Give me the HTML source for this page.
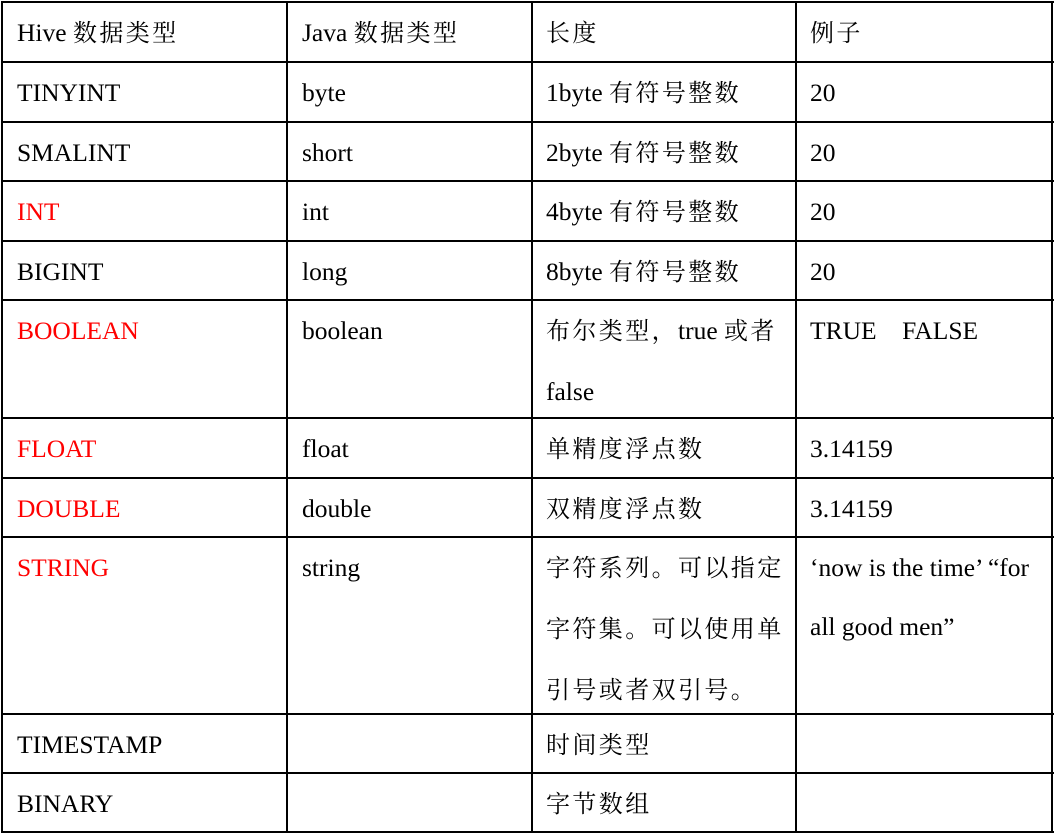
<!DOCTYPE html>
<html><head><meta charset="utf-8"><style>
body{margin:0;width:1054px;height:833px;background:#fff;position:relative;overflow:hidden;font-family:"Liberation Serif","Noto Serif CJK SC",serif;font-size:25.5px;color:#000}
.h{position:absolute;left:1px;width:1053px;height:2px;background:#000}
.v{position:absolute;top:1px;height:832px;width:2px;background:#000}
.t{position:absolute;line-height:59px;white-space:nowrap}
.r{color:#f00}
.c{font-size:24px;letter-spacing:2.4px}
</style></head><body>
<div class="h" style="top:1px"></div><div class="h" style="top:61px"></div><div class="h" style="top:121px"></div><div class="h" style="top:180px"></div><div class="h" style="top:240px"></div><div class="h" style="top:299px"></div><div class="h" style="top:417px"></div><div class="h" style="top:477px"></div><div class="h" style="top:536px"></div><div class="h" style="top:713px"></div><div class="h" style="top:772px"></div><div class="h" style="top:831px"></div>
<div class="v" style="left:1px"></div><div class="v" style="left:286px"></div><div class="v" style="left:531px"></div><div class="v" style="left:795px"></div><div class="v" style="left:1051px"></div>

<div class="t" style="left:17px;top:3px">Hive <span class="c">数据类型</span></div>
<div class="t" style="left:302px;top:3px">Java <span class="c">数据类型</span></div>
<div class="t" style="left:546px;top:3px"><span class="c">长度</span></div>
<div class="t" style="left:810px;top:3px"><span class="c">例子</span></div>

<div class="t" style="left:17px;top:63px">TINYINT</div>
<div class="t" style="left:302px;top:63px">byte</div>
<div class="t" style="left:546px;top:63px">1byte <span class="c">有符号整数</span></div>
<div class="t" style="left:810px;top:63px">20</div>

<div class="t" style="left:17px;top:123px">SMALINT</div>
<div class="t" style="left:302px;top:123px">short</div>
<div class="t" style="left:546px;top:123px">2byte <span class="c">有符号整数</span></div>
<div class="t" style="left:810px;top:123px">20</div>

<div class="t r" style="left:17px;top:182px">INT</div>
<div class="t" style="left:302px;top:182px">int</div>
<div class="t" style="left:546px;top:182px">4byte <span class="c">有符号整数</span></div>
<div class="t" style="left:810px;top:182px">20</div>

<div class="t" style="left:17px;top:242px">BIGINT</div>
<div class="t" style="left:302px;top:242px">long</div>
<div class="t" style="left:546px;top:242px">8byte <span class="c">有符号整数</span></div>
<div class="t" style="left:810px;top:242px">20</div>

<div class="t r" style="left:17px;top:301px">BOOLEAN</div>
<div class="t" style="left:302px;top:301px">boolean</div>
<div class="t" style="left:546px;top:301px"><span class="c">布尔类型，</span>true <span class="c">或者</span><br>false</div>
<div class="t" style="left:810px;top:301px">TRUE&nbsp;&nbsp;&nbsp;&nbsp;FALSE</div>

<div class="t r" style="left:17px;top:419px">FLOAT</div>
<div class="t" style="left:302px;top:419px">float</div>
<div class="t" style="left:546px;top:419px"><span class="c">单精度浮点数</span></div>
<div class="t" style="left:810px;top:419px">3.14159</div>

<div class="t r" style="left:17px;top:479px">DOUBLE</div>
<div class="t" style="left:302px;top:479px">double</div>
<div class="t" style="left:546px;top:479px"><span class="c">双精度浮点数</span></div>
<div class="t" style="left:810px;top:479px">3.14159</div>

<div class="t r" style="left:17px;top:538px">STRING</div>
<div class="t" style="left:302px;top:538px">string</div>
<div class="t" style="left:546px;top:538px"><span class="c">字符系列。可以指定<br>字符集。可以使用单<br>引号或者双引号。</span></div>
<div class="t" style="left:810px;top:538px">‘now is the time’ “for<br>all good men”</div>

<div class="t" style="left:17px;top:715px">TIMESTAMP</div>
<div class="t" style="left:546px;top:715px"><span class="c">时间类型</span></div>

<div class="t" style="left:17px;top:774px">BINARY</div>
<div class="t" style="left:546px;top:774px"><span class="c">字节数组</span></div>
</body></html>
